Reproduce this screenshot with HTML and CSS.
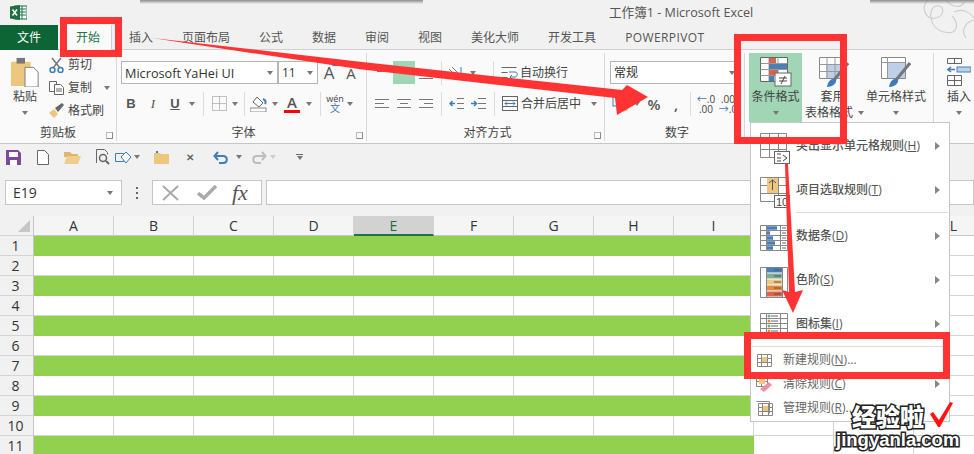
FILE: index.html
```html
<!DOCTYPE html>
<html lang="zh-CN">
<head>
<meta charset="utf-8">
<title>工作簿1 - Microsoft Excel</title>
<link rel="stylesheet" href="styles.css">
</head>
<body>
<div class="app">
  <header class="titlebar">
    <svg class="logo" width="17" height="15" viewBox="0 0 17 15"><rect x="5" y="1" width="12" height="13" fill="#fff" stroke="#1d7044"/><path d="M10 4h6M10 7h6M10 10h6M12 1v13" stroke="#1d7044"/><path d="M0 1.500 10 0v15L0 13.500z" fill="#1d7044"/><path d="M2.500 4.500 7 10.500M7 4.500 2.500 10.500" stroke="#fff" stroke-width="1.500"/></svg>
    <div class="doc-title">工作簿1 - Microsoft Excel</div>
    <svg class="swirl" width="104" height="40" viewBox="0 0 104 40" fill="none" stroke="#cfcfcf" stroke-width="1.200"><path d="M58 0c-8 8-2 20 8 18s8-14 0-12-8 22 8 26 14-10 8-16"/><path d="M76 0c6 8 16 8 18 2M84 12c8-4 16 0 20 6M96 38c-6-8 0-16 8-18"/></svg>
  </header>
  <nav class="tabs">
    <div class="tab-file">文件</div>
    <div class="tab-home">开始</div>
    <div class="tab-list">
      <span>插入</span><span>页面布局</span><span>公式</span><span>数据</span><span>审阅</span><span>视图</span><span>美化大师</span><span>开发工具</span><span class="latin">POWERPIVOT</span>
    </div>
  </nav>
  <section class="ribbon">
    <div class="group g-clip">
      <div class="group-body clip-body">
        <div class="big paste">
          <svg class="big-ico" width="30" height="32" viewBox="0 0 30 32"><rect x="0" y="5" width="21" height="26" rx="1" fill="#eec77f"/><rect x="6" y="1" width="9" height="6" fill="#777"/><path d="M15 11h9l5 5v16H15z" fill="#fff" stroke="#777"/></svg>
          <div class="big-text">粘贴</div>
          <div class="big-text"><i class="caret"></i></div>
        </div>
        <div class="small-list">
          <div class="small"><svg width="15" height="16" viewBox="0 0 15 16" fill="none"><path d="M3 1l8 10M12 1 4 11" stroke="#777" stroke-width="1.500"/><circle cx="3.500" cy="13" r="2.500" stroke="#3f7cb8" stroke-width="1.500"/><circle cx="11.500" cy="13" r="2.500" stroke="#3f7cb8" stroke-width="1.500"/></svg><span>剪切</span></div>
          <div class="small"><svg width="15" height="14" viewBox="0 0 15 14" fill="#fff" stroke="#666"><path d="M.5.500h7v10h-7z"/><path d="M5.500 3.500h6l3 3v7h-9z"/><path d="M7 8h6M7 10h6" /></svg><span>复制</span><i class="caret caret-copy"></i></div>
          <div class="small"><svg width="15" height="15" viewBox="0 0 15 15"><path d="M0 10l5-4 4 5-4 4z" fill="#eec77f"/><path d="M6 5l7-5 2 2-6 7z" fill="#666"/></svg><span>格式刷</span></div>
        </div>
      </div>
      <div class="group-label">剪贴板<i class="launch"></i></div>
    </div>

    <div class="group g-font">
      <div class="group-body">
        <div class="tool-row">
          <div class="combo combo-font"><span>Microsoft YaHei UI</span><i class="caret"></i></div>
          <div class="combo combo-size"><span>11</span><i class="caret"></i></div>
          <div class="t t22 glyph-a big-a">A<b class="up"></b></div>
          <div class="t t22 glyph-a small-a">A<b class="down"></b></div>
        </div>
        <div class="tool-row font-row2">
          <div class="t t22 fmt"><b>B</b></div>
          <div class="t t22 fmt"><em>I</em></div>
          <div class="t t22 fmt"><u>U</u></div>
          <i class="caret c12"></i>
          <i class="sep"></i>
          <div class="t t20"><svg width="15" height="15" viewBox="0 0 15 15" fill="none" stroke="#888" stroke-dasharray="1 1"><path d="M.5.500h14v14H.500zM7.500.5v14M.5 7.500h14"/></svg></div>
          <i class="caret c12"></i>
          <i class="sep sep-f"></i>
          <div class="t t20"><svg width="18" height="16" viewBox="0 0 18 16" fill="none"><path d="M7 1l6 6-4 4-6-5z" fill="#fff" stroke="#666"/><path d="M13 3c3 1 3 3 2 5" stroke="#3f7cb8" stroke-width="2"/><rect x="0" y="12" width="16" height="4" fill="#fff" stroke="#888"/></svg></div>
          <i class="caret c12"></i>
          <div class="t t22 font-color"><span>A</span><b></b></div>
          <i class="caret c12"></i>
          <i class="sep"></i>
          <div class="t t18 wen"><span>wén</span><span class="wen-b">文</span></div>
          <i class="caret c12"></i>
        </div>
      </div>
      <div class="group-label">字体<i class="launch"></i></div>
    </div>

    <div class="group g-align">
      <div class="group-body">
        <div class="tool-row">
          <div class="t t22"><svg width="14" height="12" viewBox="0 0 14 12" stroke="#777"><path d="M0 1.500h14M2 4.500h10"/></svg></div>
          <div class="t t22 on"><svg width="14" height="12" viewBox="0 0 14 12" stroke="#666"><path d="M0 5.500h14"/></svg></div>
          <div class="t t22"><svg width="14" height="14" viewBox="0 0 14 14" stroke="#777"><path d="M2 8.500h10M0 12.500h14"/></svg></div>
          <i class="sep sep-a"></i>
          <div class="t t22"><svg width="16" height="14" viewBox="0 0 16 14" fill="none" stroke="#777"><path d="M1 3l8 8M4 1l8 8"/><path d="M13 1v6" stroke="#3f7cb8"/></svg></div>
          <i class="caret c12"></i>
          <i class="sep sep-c"></i>
          <div class="wide-btn"><svg width="17" height="14" viewBox="0 0 17 14" fill="none" stroke="#666"><path d="M.5 1.500h15M.5 6.500h6M.5 11.500h6"/><path d="M9 11h5c3 0 3-5 0-5H8M11 9l-2 2 2 2" stroke="#3f7cb8"/></svg><span>自动换行</span></div>
        </div>
        <div class="tool-row">
          <div class="t t22"><svg width="14" height="12" viewBox="0 0 14 12" stroke="#777"><path d="M0 1.500h14M0 5.500h9M0 9.500h14"/></svg></div>
          <div class="t t22"><svg width="14" height="12" viewBox="0 0 14 12" stroke="#777"><path d="M0 1.500h14M3 5.500h8M0 9.500h14"/></svg></div>
          <div class="t t22"><svg width="14" height="12" viewBox="0 0 14 12" stroke="#777"><path d="M0 1.500h14M5 5.500h9M0 9.500h14"/></svg></div>
          <i class="sep sep-a"></i>
          <div class="t t22"><svg width="15" height="11" viewBox="0 0 15 11" fill="none"><path d="M8 .500h7M8 5.500h7M8 10.500h7" stroke="#777"/><path d="M6 5.500H1M3.500 3 1 5.500 3.500 8" stroke="#3f7cb8" stroke-width="1.500"/></svg></div>
          <div class="t t22"><svg width="15" height="11" viewBox="0 0 15 11" fill="none"><path d="M7 .500h8M7 5.500h8M7 10.500h8" stroke="#777"/><path d="M0 5.500h5M3 3l2.500 2.500L3 8" stroke="#3f7cb8" stroke-width="1.500"/></svg></div>
          <i class="sep sep-b"></i>
          <div class="wide-btn"><svg width="17" height="16" viewBox="0 0 17 16" fill="none" stroke="#666"><rect x=".5" y=".5" width="15" height="14"/><path d="M.5 4.500h15M.5 10.500h15"/><path d="M3 7.500h10M5 5.500l-2 2 2 2M11 5.500l2 2-2 2" stroke="#3f7cb8"/></svg><span>合并后居中</span><i class="caret c-merge"></i></div>
        </div>
      </div>
      <div class="group-label">对齐方式<i class="launch"></i></div>
    </div>

    <div class="group g-num">
      <div class="group-body">
        <div class="tool-row">
          <div class="combo combo-num"><span>常规</span><i class="caret"></i></div>
        </div>
        <div class="tool-row num-row2">
          <div class="t t22"><svg width="16" height="16" viewBox="0 0 16 16" fill="none"><rect x="1" y="1" width="13" height="9" stroke="#3f7cb8"/><ellipse cx="11" cy="13" rx="5" ry="2.500" fill="#eec77f"/></svg></div>
          <i class="caret c12"></i>
          <div class="t t22 sym">%</div>
          <div class="t t22 sym">,</div>
          <i class="sep sep-n"></i>
          <div class="t t22 dec"><span><em>←</em>.0</span><span>.00</span></div>
          <div class="t t22 dec"><span>.00</span><span><em>→</em>.0</span></div>
        </div>
      </div>
      <div class="group-label">数字<i class="launch"></i></div>
    </div>

    <div class="group g-style">
      <div class="big b-cond">
        <svg class="big-ico" width="32" height="30" viewBox="0 0 32 30"><path d="M.5.500h27v24H.500z" fill="#fff" stroke="#666"/><path d="M9 .5v24M18 .5v24M.5 6.500h27M.5 12.500h27M.5 18.500h27" stroke="#999"/><rect x="9" y="1" width="7" height="5" fill="#d9634c"/><rect x="9" y="7" width="18" height="5" fill="#4a7fb8"/><rect x="9" y="13" width="9" height="5" fill="#d9634c"/><rect x="9" y="19" width="5" height="5" fill="#4a7fb8"/><rect x="15" y="16" width="16" height="13" fill="#fff" stroke="#666"/><path d="M19 21h8M19 24h8M25 19l-4 8" stroke="#444" fill="none"/></svg>
        <div class="big-text">条件格式</div>
        <div class="big-text"><i class="caret"></i></div>
      </div>
      <div class="big b-table">
        <svg class="big-ico" width="30" height="30" viewBox="0 0 30 30"><path d="M.5.500h24v21H.500z" fill="#fff" stroke="#888"/><rect x="7" y="7" width="17" height="14" fill="#bdd0e8"/><path d="M8 .5v21M16 .5v21M.5 7.500h24M.5 14.500h24" stroke="#999"/><path d="M29 6 15 23" stroke="#777" stroke-width="3"/><path d="M8 30c1-6 4-9 9-8 1 4-3 8-9 8z" fill="#3f7cb8"/></svg>
        <div class="big-text">套用</div>
        <div class="big-text">表格格式<i class="caret c-inline"></i></div>
      </div>
      <div class="big b-cell">
        <svg class="big-ico" width="30" height="30" viewBox="0 0 30 30"><path d="M.5.500h24v21H.500z" fill="#fff" stroke="#888"/><path d="M.5 5.500h24M6.500.5v21" stroke="#999"/><rect x="7" y="6" width="17" height="15" fill="#bdd0e8"/><path d="M29 6 15 23" stroke="#777" stroke-width="3"/><path d="M8 30c1-6 4-9 9-8 1 4-3 8-9 8z" fill="#3f7cb8"/></svg>
        <div class="big-text">单元格样式</div>
        <div class="big-text"><i class="caret"></i></div>
      </div>
    </div>

    <div class="group g-cell">
      <div class="big b-ins">
        <svg class="big-ico" width="24" height="28" viewBox="0 0 24 28" fill="none"><path d="M.5.500h14v5H.500zM7.500.5v5M.5 17.500h14v10H.500zM7.500 17.500v10M.5 22.500h14" stroke="#666"/><rect x="10" y="9" width="14" height="5" fill="#bdd0e8" stroke="#4a7fb8"/><path d="M8 11.500H1M4 9l-3 2.500L4 14" stroke="#3f7cb8" stroke-width="1.500"/></svg>
        <div class="big-text">插入</div>
        <div class="big-text"><i class="caret"></i></div>
      </div>
    </div>
  </section>

  <div class="qat">
    <svg width="15" height="15" viewBox="0 0 15 15"><path d="M0 0h12l3 3v12H0z" fill="#7d4a9e"/><rect x="3" y="2" width="9" height="5" fill="#fff"/><rect x="4" y="10" width="7" height="5" fill="#fff"/></svg>
    <svg class="q-new" width="12" height="15" viewBox="0 0 12 15" fill="#fff" stroke="#666"><path d="M.5.500h7l4 4v10H.500z"/></svg>
    <svg class="q-open" width="17" height="13" viewBox="0 0 17 13"><path d="M0 1h6l2 2h6v3H0z" fill="#e0b56e"/><path d="M0 13 3 5h14l-3 8z" fill="#f1cd8d"/></svg>
    <svg class="q-prev" width="15" height="16" viewBox="0 0 15 16" fill="none" stroke="#666"><path d="M.5 14V.5h8l3 3v2"/><circle cx="7" cy="9" r="3.500" stroke-width="1.500"/><path d="M10 12l3 3" stroke-width="2"/></svg>
    <svg class="q-shape" width="17" height="13" viewBox="0 0 17 13" fill="none" stroke="#3f7cb8"><path d="M.5 2.500h8v8h-8z"/><path d="M11 1l5 5-5 6-5-6z" fill="#f8f8f8"/></svg>
    <i class="caret q-c1"></i>
    <svg class="q-folder" width="15" height="13" viewBox="0 0 15 13"><path d="M0 2h6l1 1h8v10H0z" fill="#eec77f"/><path d="M3 0v2" stroke="#3f7cb8" stroke-width="2"/></svg>
    <span class="q-x">✕</span>
    <svg class="q-undo" width="15" height="13" viewBox="0 0 15 13" fill="none" stroke="#3f7cb8" stroke-width="2"><path d="M2 5h8c5 0 5 7 0 7H6M5 1 1.500 5 5 9"/></svg>
    <i class="caret q-c2"></i>
    <svg class="q-redo" width="15" height="13" viewBox="0 0 15 13" fill="none" stroke="#bdbdbd" stroke-width="2"><path d="M13 5H5c-5 0-5 7 0 7h4M10 1l3.500 4L10 9"/></svg>
    <i class="caret q-c3"></i>
    <div class="q-more"><b></b><i class="caret"></i></div>
  </div>

  <div class="fbar">
    <div class="name-box"><span>E19</span><i class="caret"></i></div>
    <div class="grip"><b></b><b></b><b></b></div>
    <div class="fx-box">
      <svg width="18" height="16" viewBox="0 0 18 16" stroke="#aaa" stroke-width="2" fill="none"><path d="M1 1l15 14M16 1 1 15"/></svg>
      <svg class="check" width="20" height="15" viewBox="0 0 20 15" stroke="#aaa" stroke-width="3.500" fill="none"><path d="M1 8l6 5L19 1"/></svg>
      <span class="fx">fx</span>
    </div>
    <div class="f-input"></div>
  </div>

  <div class="sheet">
    <div class="row head"><div class="rh corner"><i></i></div><div class="c">A</div><div class="c">B</div><div class="c">C</div><div class="c">D</div><div class="c sel">E</div><div class="c">F</div><div class="c">G</div><div class="c">H</div><div class="c">I</div><div class="c">J</div><div class="c">K</div><div class="c">L</div></div>
    <div class="row odd"><div class="rh">1</div><div class="c"></div><div class="c"></div><div class="c"></div><div class="c"></div><div class="c"></div><div class="c"></div><div class="c"></div><div class="c"></div><div class="c"></div><div class="c"></div><div class="c"></div><div class="c"></div></div>
    <div class="row"><div class="rh">2</div><div class="c"></div><div class="c"></div><div class="c"></div><div class="c"></div><div class="c"></div><div class="c"></div><div class="c"></div><div class="c"></div><div class="c"></div><div class="c"></div><div class="c"></div><div class="c"></div></div>
    <div class="row odd"><div class="rh">3</div><div class="c"></div><div class="c"></div><div class="c"></div><div class="c"></div><div class="c"></div><div class="c"></div><div class="c"></div><div class="c"></div><div class="c"></div><div class="c"></div><div class="c"></div><div class="c"></div></div>
    <div class="row"><div class="rh">4</div><div class="c"></div><div class="c"></div><div class="c"></div><div class="c"></div><div class="c"></div><div class="c"></div><div class="c"></div><div class="c"></div><div class="c"></div><div class="c"></div><div class="c"></div><div class="c"></div></div>
    <div class="row odd"><div class="rh">5</div><div class="c"></div><div class="c"></div><div class="c"></div><div class="c"></div><div class="c"></div><div class="c"></div><div class="c"></div><div class="c"></div><div class="c"></div><div class="c"></div><div class="c"></div><div class="c"></div></div>
    <div class="row"><div class="rh">6</div><div class="c"></div><div class="c"></div><div class="c"></div><div class="c"></div><div class="c"></div><div class="c"></div><div class="c"></div><div class="c"></div><div class="c"></div><div class="c"></div><div class="c"></div><div class="c"></div></div>
    <div class="row odd"><div class="rh">7</div><div class="c"></div><div class="c"></div><div class="c"></div><div class="c"></div><div class="c"></div><div class="c"></div><div class="c"></div><div class="c"></div><div class="c"></div><div class="c"></div><div class="c"></div><div class="c"></div></div>
    <div class="row"><div class="rh">8</div><div class="c"></div><div class="c"></div><div class="c"></div><div class="c"></div><div class="c"></div><div class="c"></div><div class="c"></div><div class="c"></div><div class="c"></div><div class="c"></div><div class="c"></div><div class="c"></div></div>
    <div class="row odd"><div class="rh">9</div><div class="c"></div><div class="c"></div><div class="c"></div><div class="c"></div><div class="c"></div><div class="c"></div><div class="c"></div><div class="c"></div><div class="c"></div><div class="c"></div><div class="c"></div><div class="c"></div></div>
    <div class="row"><div class="rh">10</div><div class="c"></div><div class="c"></div><div class="c"></div><div class="c"></div><div class="c"></div><div class="c"></div><div class="c"></div><div class="c"></div><div class="c"></div><div class="c"></div><div class="c"></div><div class="c"></div></div>
    <div class="row odd"><div class="rh">11</div><div class="c"></div><div class="c"></div><div class="c"></div><div class="c"></div><div class="c"></div><div class="c"></div><div class="c"></div><div class="c"></div><div class="c"></div><div class="c"></div><div class="c"></div><div class="c"></div></div>
  </div>

  <div class="menu">
    <div class="mi"><svg width="31" height="31" viewBox="0 0 31 31" fill="none"><path d="M.5.500h26v24H.500zM9.500.5v24M18.500.5v24M.5 8.500h26M.5 16.500h26" stroke="#888"/><rect x="14.500" y="18.500" width="15" height="12" fill="#fff" stroke="#666"/><path d="M17 21h4M17 25h4M17 28h4M23 22l4 3-4 3" stroke="#444"/></svg><span class="ml">突出显示单元格规则(<u>H</u>)</span><i class="arrow"></i></div>
    <div class="mi"><svg width="31" height="31" viewBox="0 0 31 31" fill="none"><path d="M.5.500h26v24H.500zM18.500.5v24M.5 8.500h26M.5 16.500h26" stroke="#888"/><rect x="7" y="1" width="11" height="15" fill="#eec77f"/><path d="M12.500 13V3M9 6l3.500-3L16 6" stroke="#555"/><rect x="14.500" y="18.500" width="15" height="12" fill="#fff" stroke="#666"/><text x="16" y="28.500" class="ten">10</text></svg><span class="ml">项目选取规则(<u>T</u>)</span><i class="arrow"></i></div>
    <div class="msep"></div>
    <div class="mi"><svg width="31" height="27" viewBox="0 0 31 27" fill="none"><path d="M.5.500h27v25H.500zM6.500.5v25M20.500.5v25M.5 5.500h27M.5 10.500h27M.5 15.500h27M.5 20.500h27" stroke="#888"/><path d="M7 3h10M7 8h3M7 13h6M7 18h8M7 23h6" stroke="#4a7fb8" stroke-width="3.500"/><path d="M22 3h4M22 8h4M22 13h4M22 18h4M22 23h4" stroke="#666"/></svg><span class="ml">数据条(<u>D</u>)</span><i class="arrow"></i></div>
    <div class="mi"><svg width="31" height="31" viewBox="0 0 31 31" fill="none"><path d="M.5.500h27v30H.500zM6.500.5v30M22.500.5v30" stroke="#888"/><path d="M7 3h15" stroke="#4a7fb8" stroke-width="5"/><path d="M7 9h15" stroke="#7fae96" stroke-width="5"/><path d="M7 15h15" stroke="#eec77f" stroke-width="5"/><path d="M7 21h15" stroke="#e78a3d" stroke-width="5"/><path d="M7 27h15" stroke="#d9634c" stroke-width="5"/><path d="M14 3h7M14 9h7M14 15h7M14 21h7M14 27h7" stroke="#555"/></svg><span class="ml">色阶(<u>S</u>)</span><i class="arrow"></i></div>
    <div class="mi"><svg width="31" height="27" viewBox="0 0 31 27" fill="none"><path d="M.5.500h27v25H.500zM6.500.5v25M20.500.5v25M.5 5.500h27M.5 10.500h27M.5 15.500h27M.5 20.500h27" stroke="#888"/><path d="M11 3h7M11 8h7M11 13h7M11 18h7M11 23h7" stroke="#666"/><circle cx="9" cy="3" r="1.500" fill="#6fb08f"/><circle cx="9" cy="8" r="1.500" fill="#e78a3d"/><circle cx="9" cy="13" r="1.500" fill="#6fb08f"/><circle cx="9" cy="18" r="1.500" fill="#e78a3d"/></svg><span class="ml">图标集(<u>I</u>)</span><i class="arrow"></i></div>
    <div class="msep"></div>
    <div class="mi2"><svg width="15" height="13" viewBox="0 0 15 13" fill="none"><path d="M.5.500h14v12H.500zM.5 4.500h14M.5 8.500h14M4.500.5v12M10.500.5v12" stroke="#888"/><rect x="5" y="3" width="5" height="5" fill="#eec77f"/></svg><span>新建规则(<u>N</u>)...</span></div>
    <div class="mi2"><svg width="17" height="15" viewBox="0 0 17 15" fill="none"><path d="M.5.500h11v9H.500zM.5 4.500h11M5.500.5v9" stroke="#888"/><rect x="3" y="2" width="6" height="5" fill="#eec77f"/><path d="M4 12 13 5l3 3-8 7z" fill="#ee8fa2"/></svg><span>清除规则(<u>C</u>)</span><i class="arrow"></i></div>
    <div class="mi2"><svg width="17" height="15" viewBox="0 0 17 15" fill="none"><path d="M.5.500h13v12" stroke="#888"/><path d="M2.500 2.500h14v12h-14zM2.500 6.500h14M2.500 10.500h14M6.500 2.500v12M12.500 2.500v12" stroke="#888"/><rect x="7" y="5" width="5" height="5" fill="#eec77f"/></svg><span>管理规则(<u>R</u>)...</span></div>
  </div>

  <i class="mark m1"></i>
  <i class="mark m2"></i>
  <i class="mark m3"></i>
  <svg class="arrows" width="974" height="454" viewBox="0 0 974 454"><path fill="#ff3333" d="M152 38 360 61.700 622 90 627 85 648 97 617 115 615 98 360 69.300zM785 163 788 164 795 292 803 290 793 313 782 290 789 292z"/><path fill="#ff1414" d="M930 414l3-2 6 8 11-18 3 1-13 24h-2z"/></svg>
  <div class="shadow s1"></div>
  <div class="shadow s2"></div>
  <div class="wm wm1">经验啦</div>
  <div class="wm wm2">jingyanla.com</div>
</div>
</body>
</html>
```
FILE: styles.css
```css
* { box-sizing: border-box; }
html, body { margin: 0; padding: 0; }
body { background: #fff; }
svg { display: block; flex: none; }
i { font-style: normal; }
.app {
  position: relative; width: 974px; height: 454px; overflow: hidden;
  background: #f1f1f1; color: #444;
  font: 12px/16px "Open Sans", "Noto Sans CJK SC", sans-serif;
}
.titlebar { height: 25px; display: flex; align-items: center; position: relative; padding-left: 10px; }
.doc-title { margin-left: 582px; font-size: 12.6px; color: #555; white-space: nowrap; }
.swirl { position: absolute; right: 0; top: 0; }
.shadow { position: absolute; top: 0; height: 4px; background: linear-gradient(#8c8c8c, rgba(200,200,200,0)); }
.s1 { left: 140px; width: 283px; }
.s2 { left: 870px; width: 104px; }

.tabs { height: 25px; display: flex; border-bottom: 1px solid #d0d0d0; color: #555; }
.tab-file { width: 58px; height: 25px; background: #0d6536; color: #fff; text-align: center; line-height: 25px; }
.tab-home { width: 48px; height: 25px; margin-left: 6px; background: #fafafa; color: #217346; text-align: center; line-height: 25px; border: 1px solid #d0d0d0; border-bottom: 0; border-top: 0; }
.tab-list { display: flex; gap: 29px; margin-left: 17px; line-height: 25px; white-space: nowrap; }
.latin { letter-spacing: .4px; }

.ribbon { height: 94px; display: flex; background: #fafafa; border-bottom: 1px solid #c6c6c6; }
.group { display: flex; flex-direction: column; position: relative; border-right: 1px solid #d8d8d8; margin: 3px 0 2px; flex: none; }
.group-body { flex: 1; padding-top: 8px; }
.group-label { height: 16px; line-height: 16px; text-align: center; position: relative; color: #444; }
.launch { position: absolute; right: 3px; bottom: 2px; width: 7px; height: 7px; border: 1px solid #888; border-top-color: #bbb; border-left-color: #bbb; }
.g-clip { width: 117px; }
.g-font { width: 250px; padding-left: 4px; }
.g-align { width: 238px; padding-left: 4px; }
.g-num { width: 140px; padding-left: 5px; }
.g-style { width: 189px; flex-direction: row; padding-left: 4px; }
.g-cell { flex: 1; border-right: 0; padding-left: 0; flex-direction: row; }

.clip-body { display: flex; padding: 0; }
.paste { width: 42px; margin-left: 4px; }
.small-list { margin-left: 3px; display: flex; flex-direction: column; }
.small { height: 23px; display: flex; align-items: center; gap: 4px; width: 66px; position: relative; }
.caret { display: inline-block; width: 0; height: 0; border: 3.500px solid transparent; border-top: 4px solid #777; border-bottom: 0; }
.caret-copy { margin-left: 8px; }
.big { display: flex; flex-direction: column; align-items: center; height: 69px; flex: none; }
.big-ico { height: 30px; padding-top: 4px; box-sizing: content-box; }
.big-text { height: 16px; white-space: nowrap; line-height: 16px; display: flex; align-items: center; }
.big-ico + .big-text { margin-top: 2px; }
.c-inline { margin-left: 5px; }
.b-cond { width: 53px; background: #a0d5b5; }
.b-table { width: 61px; }
.b-table .big-ico { margin-left: 3px; }
.b-table .big-text:last-child { margin-left: 4px; }
.b-cell { width: 66px; }
.b-ins { width: 46px; margin-left: 2px; }

.tool-row { display: flex; align-items: center; height: 23px; margin-bottom: 8px; }
.combo { height: 23px; background: #fff; border: 1px solid #b5b5b5; display: flex; align-items: center; justify-content: space-between; padding: 0 4px 0 3px; color: #333; white-space: nowrap; }
.combo-font { width: 157px; font-size: 12.7px; }
.combo-size { width: 40px; margin-left: 0; }
.combo-num { width: 130px; }
.t { height: 23px; display: flex; align-items: center; justify-content: center; flex: none; }
.t18 { width: 18px; }
.t20 { width: 20px; }
.t22 { width: 22px; }
.c12 { margin: 0 3px; }
.sep { width: 1px; height: 24px; background: #dcdcdc; margin: 0 5px; flex: none; }
.sep-f { margin: 0 4px 0 3px; }
.sep-a { margin: 0 3px 0 4px; }
.sep-b { margin: 0 7px 0 5px; }
.sep-c { margin: 0 7px 0 14px; }
.sep-n { margin: 0 4px 0 3px; }
.on { background: #a0d5b5; }
.glyph-a { position: relative; font-size: 15px; color: #555; }
.big-a { font-size: 17px; }
.up, .down { position: absolute; top: 2px; right: 2px; width: 0; height: 0; border: 3px solid transparent; }
.up { border-bottom: 3px solid #3f7cb8; border-top: 0; }
.down { border-top: 3px solid #3f7cb8; border-bottom: 0; }
.font-row2 { margin-left: -1px; }
.fmt { font-size: 13px; color: #555; font-family: "Liberation Serif", serif; }
.fmt b { font-family: "Liberation Sans", sans-serif; }
.fmt u { font-family: "Liberation Sans", sans-serif; font-weight: 700; }
.font-color { flex-direction: column; position: relative; font-size: 15px; font-weight: 600; color: #555; }
.font-color span { line-height: 14px; }
.font-color b { width: 16px; height: 3px; background: #f00; margin-top: 1px; }
.wen { flex-direction: column; font-size: 9px; line-height: 9px; }
.wen-b { color: #3f7cb8; font-size: 10px; line-height: 11px; }
.wide-btn { display: flex; align-items: center; gap: 2px; white-space: nowrap; position: relative; }
.c-merge { margin-left: 8px; }
.num-row2 { margin-left: -1px; }
.sym { font-size: 15px; color: #555; font-weight: 600; }
.dec { flex-direction: column; font-size: 10px; line-height: 10px; }
.dec em { font-style: normal; color: #3f7cb8; }

.qat { height: 34px; display: flex; align-items: center; padding-left: 6px; padding-bottom: 8px; }
.q-new { margin-left: 16px; }
.q-open { margin-left: 15px; }
.q-prev { margin-left: 15px; }
.q-shape { margin-left: 4px; }
.q-c1 { margin-left: 2px; }
.q-folder { margin-left: 14px; }
.q-x { margin-left: 17px; font-size: 10px; color: #666; font-weight: 700; width: 10px; }
.q-undo { margin-left: 17px; }
.q-c2 { margin-left: 8px; }
.q-redo { margin-left: 10px; }
.q-c3 { margin-left: 3px; border-top-color: #ccc; }
.q-more { margin-left: 20px; display: flex; flex-direction: column; align-items: center; gap: 1px; }
.q-more b { width: 7px; height: 1px; background: #666; }

.fbar { height: 28px; display: flex; padding: 2px 0 1px 5px; }
.name-box { width: 117px; height: 25px; background: #fff; border: 1px solid #c6c6c6; display: flex; align-items: center; justify-content: space-between; padding: 0 8px 0 7px; font-size: 14px; color: #333; }
.grip { width: 30px; display: flex; flex-direction: column; align-items: center; justify-content: center; gap: 3px; }
.grip b { width: 2px; height: 2px; background: #666; }
.fx-box { width: 110px; height: 25px; background: #fff; border: 1px solid #c6c6c6; display: flex; align-items: center; padding-left: 9px; }
.check { margin-left: 17px; }
.fx { margin-left: 15px; font: italic 400 22px/22px "Liberation Serif", serif; color: #555; }
.f-input { flex: 1; height: 25px; margin-left: 4px; background: #fff; border: 1px solid #c6c6c6; }

.sheet { margin-top: 10px; }
.row { display: flex; height: 20px; }
.rh { width: 34px; flex: none; background: #f1f1f1; border-right: 1px solid #c6c6c6; border-bottom: 1px solid #d4d4d4; text-align: center; font-size: 14px; line-height: 20px; color: #333; padding-right: 2px; }
.c { width: 80px; flex: none; background: #fff; border-right: 1px solid #d4d4d4; border-bottom: 1px solid #d4d4d4; }
.head .c { background: #f5f5f5; text-align: center; font-size: 14px; line-height: 19px; color: #333; border-bottom: 1px solid #c6c6c6; }
.head .sel { background: #d2d2d2; color: #1a6b40; border-bottom: 2px solid #217346; }
.corner { position: relative; }
.corner i { position: absolute; right: 3px; bottom: 3px; border: 6.500px solid #c6c6c6; border-top-color: transparent; border-left-color: transparent; }
.odd .c:nth-child(-n+10) { background: #92d050; border-right-color: #92d050; border-bottom-color: #92d050; }

.menu { position: absolute; left: 750px; top: 122px; width: 200px; height: 300px; background: #fff; border: 1px solid #c6c6c6; padding-top: 1px; display: flex; flex-direction: column; }
.mi { height: 44px; flex: none; display: flex; align-items: center; padding-left: 9px; position: relative; }
.mi svg { margin-top: 4px; }
.ml { position: absolute; left: 45px; font-weight: 500; color: #555; }
.ten { font: 11px "Liberation Sans", sans-serif; fill: #444; }
.arrow { position: absolute; right: 9px; top: 50%; margin-top: -4px; width: 0; height: 0; border: 4px solid transparent; border-left: 5px solid #888; border-right: 0; }
.msep { height: 1px; margin: 0 1px 0 45px; background: #dcdcdc; flex: none; }
.msep + .mi { margin-top: 1px; }
.mi2 { height: 24px; flex: none; display: flex; align-items: center; padding-left: 5px; position: relative; color: #666; }
.mi2 svg { width: 17px; margin-right: 10px; }
.msep:has(+ .mi2) { margin-left: 1px; margin-bottom: 1px; }

.mark { position: absolute; border: 7px solid #ff3333; }
.m1 { left: 60px; top: 17px; width: 62px; height: 40px; }
.m2 { left: 734px; top: 34px; width: 113px; height: 110px; }
.m3 { left: 744px; top: 332px; width: 206px; height: 47px; }
.arrows { position: absolute; left: 0; top: 0; }

.wm { position: absolute; color: #fff; font-weight: 900; white-space: nowrap; font-family: "Noto Sans CJK SC", sans-serif; -webkit-text-stroke: 3px #222; paint-order: stroke fill; }
.wm1 { left: 852px; top: 401px; font-size: 24px; line-height: 30px; }
.wm2 { left: 836px; top: 428px; font-size: 18.5px; line-height: 24px; font-family: "Liberation Sans", sans-serif; font-weight: 700; }
```
